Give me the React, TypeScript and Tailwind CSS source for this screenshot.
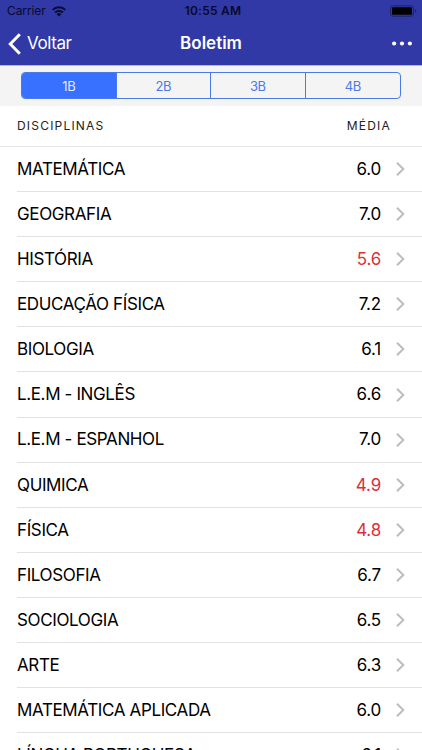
import React, { useState } from 'react';

interface Subject {
  name: string;
  average: string;
}

const subjects: Subject[] = [
  { name: 'MATEMÁTICA', average: '6.0' },
  { name: 'GEOGRAFIA', average: '7.0' },
  { name: 'HISTÓRIA', average: '5.6' },
  { name: 'EDUCAÇÃO FÍSICA', average: '7.2' },
  { name: 'BIOLOGIA', average: '6.1' },
  { name: 'L.E.M - INGLÊS', average: '6.6' },
  { name: 'L.E.M - ESPANHOL', average: '7.0' },
  { name: 'QUIMICA', average: '4.9' },
  { name: 'FÍSICA', average: '4.8' },
  { name: 'FILOSOFIA', average: '6.7' },
  { name: 'SOCIOLOGIA', average: '6.5' },
  { name: 'ARTE', average: '6.3' },
  { name: 'MATEMÁTICA APLICADA', average: '6.0' },
  { name: 'LÍNGUA PORTUGUESA', average: '6.1' },
];

const terms = ['1B', '2B', '3B', '4B'];

const StatusBar: React.FC = () => (
  <div className="grid grid-cols-3 items-center h-[22px] pl-[7px] pr-[5px] text-[#080a2e]">
    <div className="flex items-center gap-[6px]">
      <span className="text-[12px] tracking-[-0.1px]">Carrier</span>
      <svg width="14" height="11" viewBox="0 0 14 11" fill="none" stroke="currentColor" strokeWidth="2">
        <path d="M0.7 3.9a8.9 8.9 0 0 1 12.6 0" />
        <path d="M3.1 6.5a5.5 5.5 0 0 1 7.8 0" />
        <path d="M7 10.6 4.7 8.3a3.2 3.2 0 0 1 4.6 0z" fill="currentColor" stroke="none" />
      </svg>
    </div>
    <span className="text-center text-[12px] font-semibold tracking-[0.25px] whitespace-nowrap pl-[2px]">10:55 AM</span>
    <svg className="justify-self-end" width="27" height="12" viewBox="0 0 27 12">
      <rect x="0.5" y="0.8" width="23" height="10.4" rx="2.2" fill="none" stroke="#1d2268" />
      <rect x="2" y="2.3" width="20" height="7.4" rx="0.8" fill="#000" />
      <path d="M25 4.2c1.8.5 1.8 3.1 0 3.6z" fill="#1d2268" />
    </svg>
  </div>
);

const App: React.FC = () => {
  const [term, setTerm] = useState('1B');

  return (
    <div className="h-[750px] overflow-hidden bg-white text-black font-['Inter','Liberation_Sans',sans-serif]">
      <header className="h-[66px] bg-[#3039a5] border-b border-[#b4b6d8]">
        <StatusBar />
        <div className="grid grid-cols-3 items-center h-[43px] pl-[8px] pr-[10px] text-white">
          <button className="flex items-center gap-[6px] text-[17px] tracking-[-0.4px]">
            <svg width="13" height="22" viewBox="0 0 13 22" fill="none" stroke="currentColor" strokeWidth="3">
              <path d="M11.8 1.2 2.3 11l9.5 9.8" />
            </svg>
            Voltar
          </button>
          <h1 className="text-center text-[17px] font-semibold pl-[2px]">Boletim</h1>
          <button className="justify-self-end" aria-label="Mais">
            <svg width="20" height="5" viewBox="0 0 20 5" fill="currentColor">
              <circle cx="2.1" cy="2.5" r="2.1" />
              <circle cx="10" cy="2.5" r="2.1" />
              <circle cx="17.9" cy="2.5" r="2.1" />
            </svg>
          </button>
        </div>
      </header>

      <div className="h-[40px] bg-[#f4f4f4] pt-[6px] px-[21px]">
        <div className="grid grid-cols-4 h-[27px] rounded-[4px] border border-[#4a7ae8] overflow-hidden divide-x divide-[#4a7ae8]">
          {terms.map((item) => (
            <button
              key={item}
              onClick={() => setTerm(item)}
              className={`pt-[2px] text-[13px] tracking-[-0.4px] ${item === term ? 'bg-[#3871ff] text-[#e4ebff]' : 'text-[#4a7be9]'}`}
            >
              {item}
            </button>
          ))}
        </div>
      </div>

      <div className="flex items-center justify-between h-[41px] pl-[17px] pr-[31px] border-b border-[#e6e6e6] text-[12px] tracking-[1.2px] text-[#222]">
        <span>DISCIPLINAS</span>
        <span>MÉDIA</span>
      </div>

      <ul className="pl-[17px]">
        {subjects.map((subject) => (
          <li key={subject.name} className="flex items-center h-[45.1px] pr-[17px] border-b border-[#e2e2e2] text-[17px]">
            <span className="flex-1 pt-[1.2px] tracking-[-0.37px]">{subject.name}</span>
            <span className={`pt-[1.2px] tracking-[-0.2px] ${Number(subject.average) < 6 ? 'text-[#dc2f3a]' : ''}`}>{subject.average}</span>
            <svg className="ml-[15px]" width="9" height="14" viewBox="0 0 9 14" fill="none" stroke="#bcbcc1" strokeWidth="2">
              <path d="M1 0.8 7.3 7 1 13.2" />
            </svg>
          </li>
        ))}
      </ul>
    </div>
  );
};

export default App;
